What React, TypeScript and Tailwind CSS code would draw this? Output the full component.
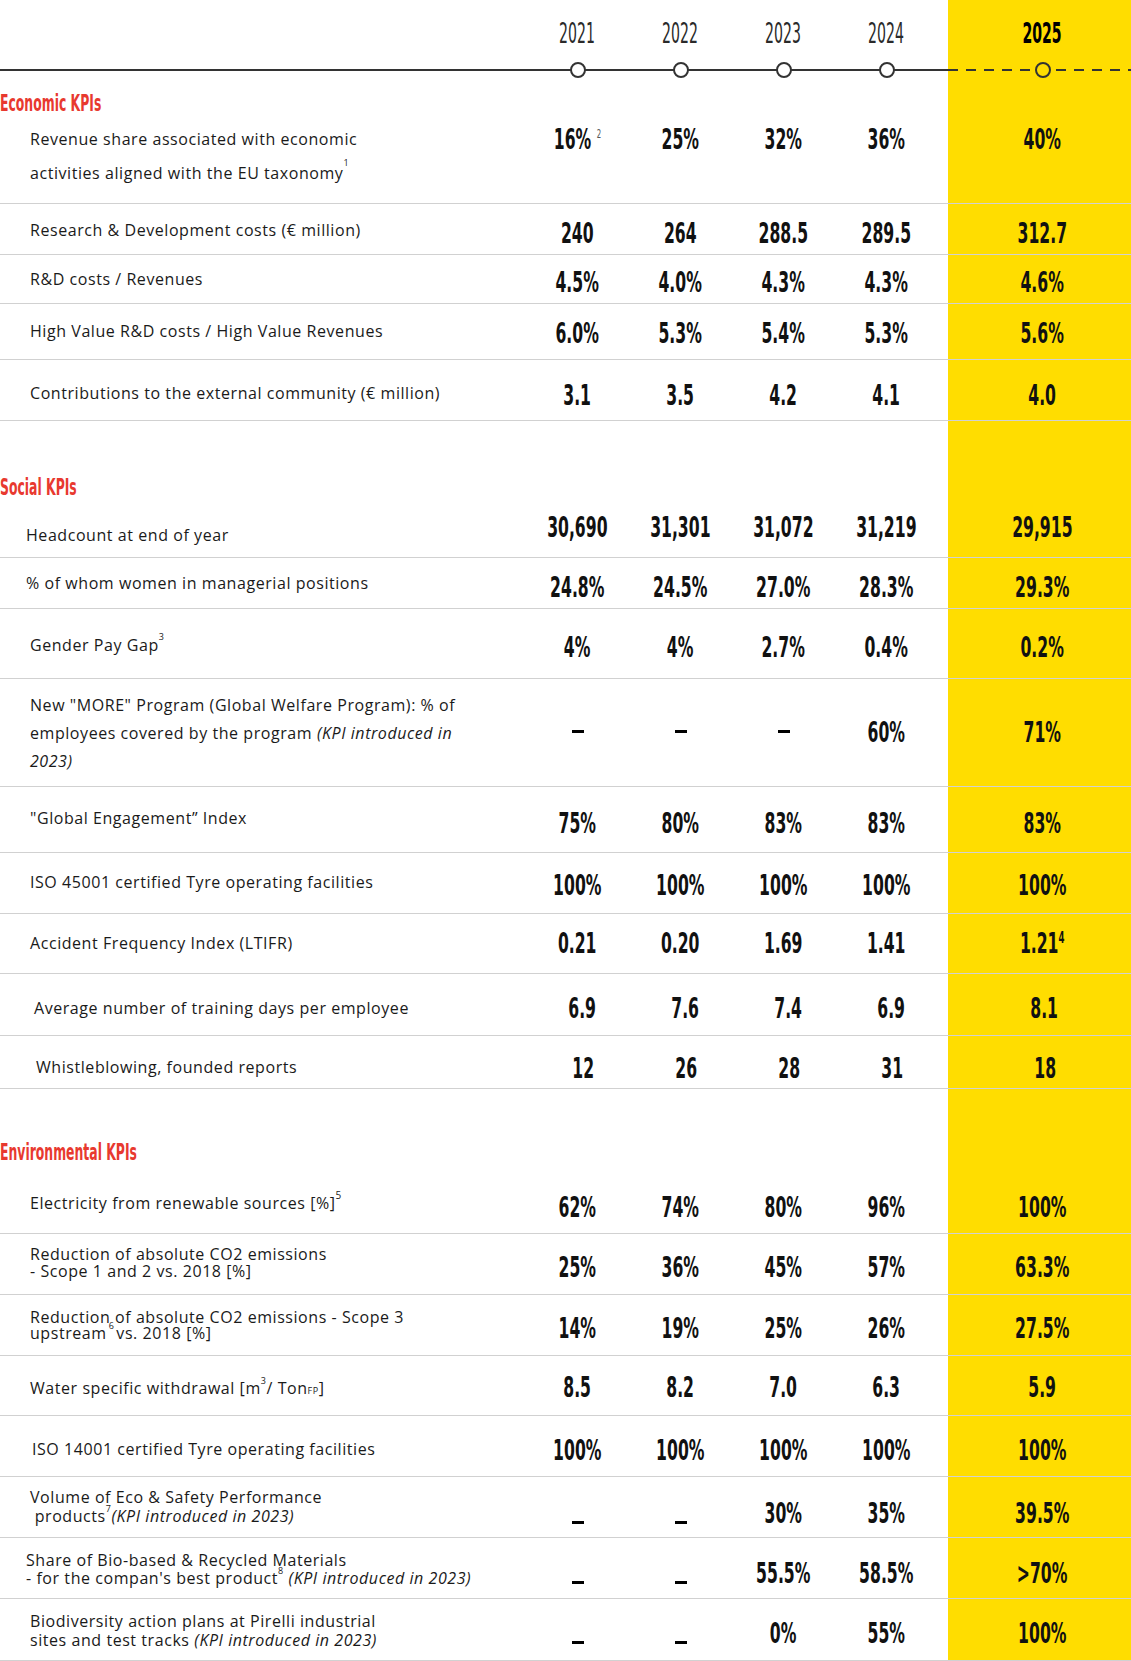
import React from 'react'

const GRID = 'grid grid-cols-[526px_103px_103px_103px_103px_10px_183px]'
const NUM = "font-['Liberation_Sans_Narrow','Arial_Narrow','DejaVu_Sans_Condensed',sans-serif]"
const BODY = "font-['Open_Sans',sans-serif]"
const YELLOW = 'bg-[#FFDD00]'

type Row = {
  label: React.ReactNode
  v: React.ReactNode[]
  h: string
  lab: string
  val: string
}

function Sup({ children, className = '' }: { children: React.ReactNode; className?: string }) {
  return <sup className={`text-[9px] -top-[10px] ${className}`}>{children}</sup>
}

function Value({ v }: { v: React.ReactNode }) {
  if (v === '-') return <span className="mt-[13px] h-[3px] w-[12px] bg-black" />
  if (v === '_') return <span className="mt-[23px] h-[3px] w-[12px] bg-black" />
  return (
    <span className={`inline-block scale-x-[0.6] ${NUM} text-[29px] leading-[30px] font-bold text-[#111]`}>
      {v}
    </span>
  )
}

const economic: Row[] = [
  {
    label: (
      <>
        Revenue share associated with economic
        <br />
        activities aligned with the EU taxonomy<Sup className="-top-[13px]">1</Sup>
      </>
    ),
    v: [
      <>
        16%<sup className="ml-[9px] -top-[11px] text-[13px] font-normal text-[#555]">2</sup>
      </>,
      '25%',
      '32%',
      '36%',
      '40%'
    ],
    h: 'h-[84px]',
    lab: 'pl-[30px] pt-[2px] leading-[34px]',
    val: 'pt-[4px]'
  },
  {
    label: 'Research & Development costs (€ million)',
    v: ['240', '264', '288.5', '289.5', '312.7'],
    h: 'h-[51px]',
    lab: 'pl-[30px] pt-[15px] leading-[22px]',
    val: 'pt-[14px]'
  },
  {
    label: 'R&D costs / Revenues',
    v: ['4.5%', '4.0%', '4.3%', '4.3%', '4.6%'],
    h: 'h-[49px]',
    lab: 'pl-[30px] pt-[13px] leading-[22px]',
    val: 'pt-[12px]'
  },
  {
    label: 'High Value R&D costs / High Value Revenues',
    v: ['6.0%', '5.3%', '5.4%', '5.3%', '5.6%'],
    h: 'h-[56px]',
    lab: 'pl-[30px] pt-[16px] leading-[22px]',
    val: 'pt-[14px]'
  },
  {
    label: 'Contributions to the external community (€ million)',
    v: ['3.1', '3.5', '4.2', '4.1', '4.0'],
    h: 'h-[61px]',
    lab: 'pl-[30px] pt-[22px] leading-[22px]',
    val: 'pt-[20px]'
  }
]

const social: Row[] = [
  {
    label: 'Headcount at end of year',
    v: ['30,690', '31,301', '31,072', '31,219', '29,915'],
    h: 'h-[54px]',
    lab: 'pl-[26px] pt-[20px] leading-[22px]',
    val: 'pt-[8px]'
  },
  {
    label: '% of whom women in managerial positions',
    v: ['24.8%', '24.5%', '27.0%', '28.3%', '29.3%'],
    h: 'h-[51px]',
    lab: 'pl-[26px] pt-[14px] leading-[22px]',
    val: 'pt-[14px]'
  },
  {
    label: (
      <>
        Gender Pay Gap<Sup className="-top-[11px]">3</Sup>
      </>
    ),
    v: ['4%', '4%', '2.7%', '0.4%', '0.2%'],
    h: 'h-[70px]',
    lab: 'pl-[30px] pt-[25px] leading-[22px]',
    val: 'pt-[23px]'
  },
  {
    label: (
      <>
        New "MORE" Program (Global Welfare Program): % of
        <br />
        employees covered by the program <i>(KPI introduced in</i>
        <br />
        <i>2023)</i>
      </>
    ),
    v: ['-', '-', '-', '60%', '71%'],
    h: 'h-[108px]',
    lab: 'pl-[30px] pt-[12px] leading-[28px]',
    val: 'pt-[38px]'
  },
  {
    label: '"Global Engagement” Index',
    v: ['75%', '80%', '83%', '83%', '83%'],
    h: 'h-[66px]',
    lab: 'pl-[30px] pt-[20px] leading-[22px]',
    val: 'pt-[21px]'
  },
  {
    label: 'ISO 45001 certified Tyre operating facilities',
    v: ['100%', '100%', '100%', '100%', '100%'],
    h: 'h-[61px]',
    lab: 'pl-[30px] pt-[18px] leading-[22px]',
    val: 'pt-[17px]'
  },
  {
    label: 'Accident Frequency Index (LTIFR)',
    v: [
      '0.21',
      '0.20',
      '1.69',
      '1.41',
      <>
        1.21<sup className="-top-[10px] text-[16px]">4</sup>
      </>
    ],
    h: 'h-[60px]',
    lab: 'pl-[30px] pt-[18px] leading-[22px]',
    val: 'pt-[14px]'
  },
  {
    label: 'Average number of training days per employee',
    v: ['6.9', '7.6', '7.4', '6.9', '8.1'],
    h: 'h-[62px]',
    lab: 'pl-[34px] pt-[23px] leading-[22px]',
    val: 'pt-[19px] pl-[9px]'
  },
  {
    label: 'Whistleblowing, founded reports',
    v: ['12', '26', '28', '31', '18'],
    h: 'h-[53px]',
    lab: 'pl-[36px] pt-[20px] leading-[22px]',
    val: 'pt-[17px] pl-[11px]'
  }
]

const environmental: Row[] = [
  {
    label: (
      <>
        Electricity from renewable sources [%]<Sup className="-top-[6px] text-[10px]">5</Sup>
      </>
    ),
    v: ['62%', '74%', '80%', '96%', '100%'],
    h: 'h-[65px]',
    lab: 'pl-[30px] pt-[23px] leading-[22px]',
    val: 'pt-[23px]'
  },
  {
    label: (
      <>
        Reduction of absolute CO2 emissions
        <br />- Scope 1 and 2 vs. 2018 [%]
      </>
    ),
    v: ['25%', '36%', '45%', '57%', '63.3%'],
    h: 'h-[61px]',
    lab: 'pl-[30px] pt-[12px] leading-[17px]',
    val: 'pt-[18px]'
  },
  {
    label: (
      <>
        Reduction of absolute CO2 emissions - Scope 3
        <br />
        upstream<Sup className="mx-[2px] -top-[3px] text-[9px]">6</Sup>vs. 2018 [%]
      </>
    ),
    v: ['14%', '19%', '25%', '26%', '27.5%'],
    h: 'h-[61px]',
    lab: 'pl-[30px] pt-[14px] leading-[16px]',
    val: 'pt-[18px]'
  },
  {
    label: (
      <>
        Water specific withdrawal [m<Sup className="-top-[8px]">3</Sup>/ Ton
        <span className="text-[9px]">FP</span>]
      </>
    ),
    v: ['8.5', '8.2', '7.0', '6.3', '5.9'],
    h: 'h-[60px]',
    lab: 'pl-[30px] pt-[21px] leading-[22px]',
    val: 'pt-[16px]'
  },
  {
    label: 'ISO 14001 certified Tyre operating facilities',
    v: ['100%', '100%', '100%', '100%', '100%'],
    h: 'h-[61px]',
    lab: 'pl-[32px] pt-[22px] leading-[22px]',
    val: 'pt-[19px]'
  },
  {
    label: (
      <>
        Volume of Eco & Safety Performance
        <br />
        &nbsp;products<Sup className="-top-[3px]">7</Sup>
        <i>(KPI introduced in 2023)</i>
      </>
    ),
    v: ['_', '_', '30%', '35%', '39.5%'],
    h: 'h-[61px]',
    lab: 'pl-[30px] pt-[11px] leading-[19px]',
    val: 'pt-[21px]'
  },
  {
    label: (
      <>
        Share of Bio-based & Recycled Materials
        <br />- for the compan's best product<Sup className="-top-[3px]">8</Sup>{' '}
        <i>(KPI introduced in 2023)</i>
      </>
    ),
    v: ['_', '_', '55.5%', '58.5%', '>70%'],
    h: 'h-[61px]',
    lab: 'pl-[26px] pt-[13px] leading-[18px]',
    val: 'pt-[20px]'
  },
  {
    label: (
      <>
        Biodiversity action plans at Pirelli industrial
        <br />
        sites and test tracks <i>(KPI introduced in 2023)</i>
      </>
    ),
    v: ['_', '_', '0%', '55%', '100%'],
    h: 'h-[62px]',
    lab: 'pl-[30px] pt-[13px] leading-[19px]',
    val: 'pt-[19px]'
  }
]

function KpiRow({ row }: { row: Row }) {
  return (
    <div className={`${GRID} ${row.h} border-b border-black/[0.18]`}>
      <div className={`${BODY} text-[16px] tracking-[0.035em] text-[#1a1a1a] whitespace-nowrap ${row.lab}`}>
        {row.label}
      </div>
      {row.v.slice(0, 4).map((v, i) => (
        <div key={i} className={`flex justify-center ${row.val}`}>
          <Value v={v} />
        </div>
      ))}
      <div />
      <div className={`flex justify-center pl-[6px] ${YELLOW} ${row.val}`}>
        <Value v={row.v[4]} />
      </div>
    </div>
  )
}

function Title({ text, h, pt }: { text: string; h: string; pt: string }) {
  return (
    <div className={`${GRID} ${h}`}>
      <div className={`col-span-6 ${pt} ${NUM} text-[23px] leading-[34px] font-bold text-[#e8392f]`}>
        <span className="inline-block origin-left scale-x-[0.6]">{text}</span>
      </div>
      <div className={YELLOW} />
    </div>
  )
}

function Year({ year, last }: { year: string; last?: boolean }) {
  return (
    <div className={`flex flex-col ${last ? YELLOW : ''}`}>
      <div className={`flex h-[62px] justify-center pt-[19px] ${last ? 'pl-[6px]' : ''}`}>
        <span
          className={`inline-block scale-x-[0.56] ${NUM} text-[28px] leading-[30px] ${
            last ? 'font-bold text-black' : 'font-normal text-[#2a2a2a]'
          }`}
        >
          {year}
        </span>
      </div>
      <div className="relative h-[16px]">
        {last ? (
          <svg className="absolute left-0 top-[7px] h-[2px] w-full" preserveAspectRatio="none">
            <line x1="0" y1="1" x2="183" y2="1" stroke="#333" strokeWidth="2" strokeDasharray="10 8" />
          </svg>
        ) : (
          <div className="absolute left-0 right-0 top-[7px] h-[2px] bg-[#333]" />
        )}
        <div
          className={`absolute top-1/2 size-[16px] -translate-x-1/2 -translate-y-1/2 rounded-full border-2 border-[#333] ${
            last ? `left-[calc(50%+3px)] ${YELLOW}` : 'left-1/2 bg-white'
          }`}
        />
      </div>
    </div>
  )
}

export default function App() {
  return (
    <div className="w-[1131px] bg-white">
      <div className={`${GRID} h-[85px]`}>
        <div className="pt-[62px]">
          <div className="mt-[7px] h-[2px] bg-[#333]" />
        </div>
        <Year year="2021" />
        <Year year="2022" />
        <Year year="2023" />
        <Year year="2024" />
        <div className="pt-[62px]">
          <div className="mt-[7px] h-[2px] bg-[#333]" />
        </div>
        <Year year="2025" last />
      </div>

      <Title text="Economic KPIs" h="h-[35px]" pt="pt-[1px]" />
      {economic.map((r, i) => (
        <KpiRow key={i} row={r} />
      ))}

      <Title text="Social KPIs" h="h-[83px]" pt="pt-[49px]" />
      {social.map((r, i) => (
        <KpiRow key={i} row={r} />
      ))}

      <Title text="Environmental KPIs" h="h-[80px]" pt="pt-[46px]" />
      {environmental.map((r, i) => (
        <KpiRow key={i} row={r} />
      ))}
    </div>
  )
}
